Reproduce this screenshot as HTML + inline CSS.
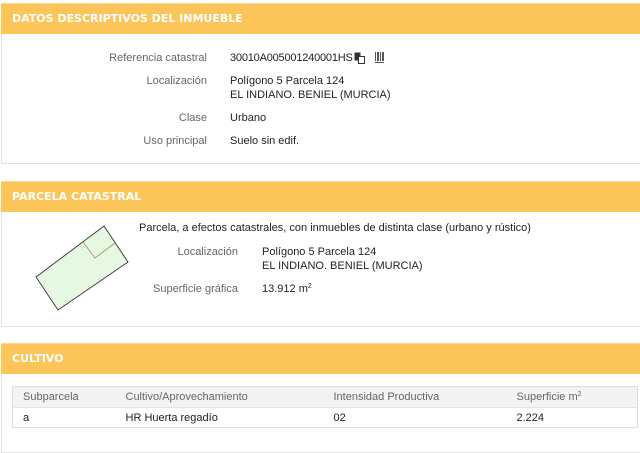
<!DOCTYPE html>
<html><head><meta charset="utf-8"><style>
*{margin:0;padding:0;box-sizing:border-box}
body{width:640px;height:440px;overflow:hidden;background:#fff;font-family:"Liberation Sans",Arial,sans-serif;font-size:11px;color:#222;position:relative}
.p{position:absolute;left:1px;width:660px;border:1px solid #e2e2e2;background:#fff}
.h{position:absolute;left:1px;width:660px;height:31px;background:#fcc55a;border-top:1px solid #f4d79a;color:#fff;font-weight:bold;font-size:11px;font-family:"DejaVu Sans",Verdana,sans-serif;line-height:30px;padding-left:11px}
.t{position:absolute;white-space:nowrap;line-height:14px}
.l{color:#666;text-align:right}
sup{font-size:7px;line-height:0;vertical-align:4px}
table{position:absolute;left:12px;top:386px;width:626px;border-collapse:collapse;border:1px solid #ddd;font-size:11px}
td{height:20px;padding-left:10px;border:none}
tr.hd td{background:#f3f3f3;color:#666;height:21px}
tr.r td{border-top:1px solid #e4e4e4}
</style></head><body>
<div class="p" style="top:3px;height:161px"></div>
<div class="h" style="top:3px">DATOS DESCRIPTIVOS DEL INMUEBLE</div>
<div class="t l" style="right:433px;top:51px">Referencia catastral</div>
<div class="t" style="left:230px;top:51px;letter-spacing:-0.2px">30010A005001240001HS</div>
<svg style="position:absolute;left:354px;top:52px" width="12" height="13"><rect x="0.5" y="0.5" width="6" height="8" fill="#333"/><rect x="4.5" y="4.5" width="6" height="7" fill="#fff" stroke="#333"/></svg>
<svg style="position:absolute;left:375px;top:52px" width="10" height="12"><g fill="#555"><rect x="0" y="0" width="1" height="9"/><rect x="2" y="0" width="2" height="9"/><rect x="5" y="0" width="1" height="9"/><rect x="7" y="0" width="2" height="9"/><rect x="0" y="10" width="9" height="1"/></g></svg>
<div class="t l" style="right:433px;top:74px">Localización</div>
<div class="t" style="left:230px;top:74px">Polígono 5 Parcela 124<br>EL INDIANO. BENIEL (MURCIA)</div>
<div class="t l" style="right:433px;top:111px">Clase</div>
<div class="t" style="left:230px;top:111px">Urbano</div>
<div class="t l" style="right:433px;top:134px">Uso principal</div>
<div class="t" style="left:230px;top:134px">Suelo sin edif.</div>

<div class="p" style="top:181px;height:146px"></div>
<div class="h" style="top:181px">PARCELA CATASTRAL</div>
<svg style="position:absolute;left:0;top:0" width="140" height="330"><polygon points="36,277 104,226 128,262 58,310" fill="#e6f8e2" stroke="#333" stroke-width="0.9"/><polyline points="83,242 95,258 115,243" fill="none" stroke="#a88858" stroke-width="0.8"/></svg>
<div class="t" style="left:139px;top:221px">Parcela, a efectos catastrales, con inmuebles de distinta clase (urbano y rústico)</div>
<div class="t l" style="right:402px;top:245px">Localización</div>
<div class="t" style="left:262px;top:245px">Polígono 5 Parcela 124<br>EL INDIANO. BENIEL (MURCIA)</div>
<div class="t l" style="right:402px;top:282px">Superficie gráfica</div>
<div class="t" style="left:262px;top:282px">13.912 m<sup>2</sup></div>

<div class="p" style="top:343px;height:110px"></div>
<div class="h" style="top:343px">CULTIVO</div>
<table>
<tr class="hd"><td style="width:103px">Subparcela</td><td style="width:208px">Cultivo/Aprovechamiento</td><td style="width:183px">Intensidad Productiva</td><td>Superficie m<sup>2</sup></td></tr>
<tr class="r"><td>a</td><td>HR Huerta regadío</td><td>02</td><td>2.224</td></tr>
</table>
</body></html>
